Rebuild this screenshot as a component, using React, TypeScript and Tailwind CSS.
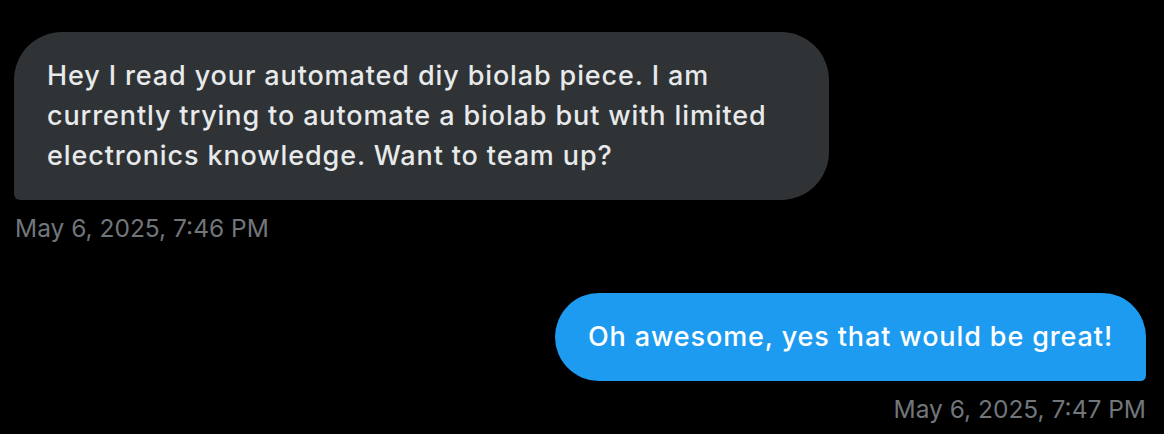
import React from "react";

export default function App() {
  return (
    <div className="min-h-[434px] w-full bg-black pt-[32px] pl-[14px] pr-[18px] font-['Inter',sans-serif]">
      <div className="flex flex-col">
        <div className="flex flex-col items-start">
          <div className="w-[815px] rounded-[48px] rounded-bl-[6px] bg-[#2f3336] px-[33px] py-[24px] text-[27px] font-medium leading-[40px] tracking-[0.88px] text-[#e7e9ea]">
            Hey I read your automated diy biolab piece. I am
            <br />
            currently trying to automate a biolab but with limited
            <br />
            electronics knowledge. Want to team up?
          </div>
          <div className="mt-[12px] pl-[1px] text-[24.5px] leading-[32px] text-[#71767b]">
            May 6, 2025, 7:46 PM
          </div>
        </div>
        <div className="mt-[49px] flex flex-col items-end">
          <div className="rounded-[48px] rounded-br-[6px] bg-[#1d9bf0] px-[33px] py-[24px] text-[27px] font-medium leading-[40px] tracking-[0.88px] text-white">
            Oh awesome, yes that would be great!
          </div>
          <div className="mt-[12px] text-[24.5px] leading-[32px] text-[#71767b]">
            May 6, 2025, 7:47 PM
          </div>
        </div>
      </div>
    </div>
  );
}
